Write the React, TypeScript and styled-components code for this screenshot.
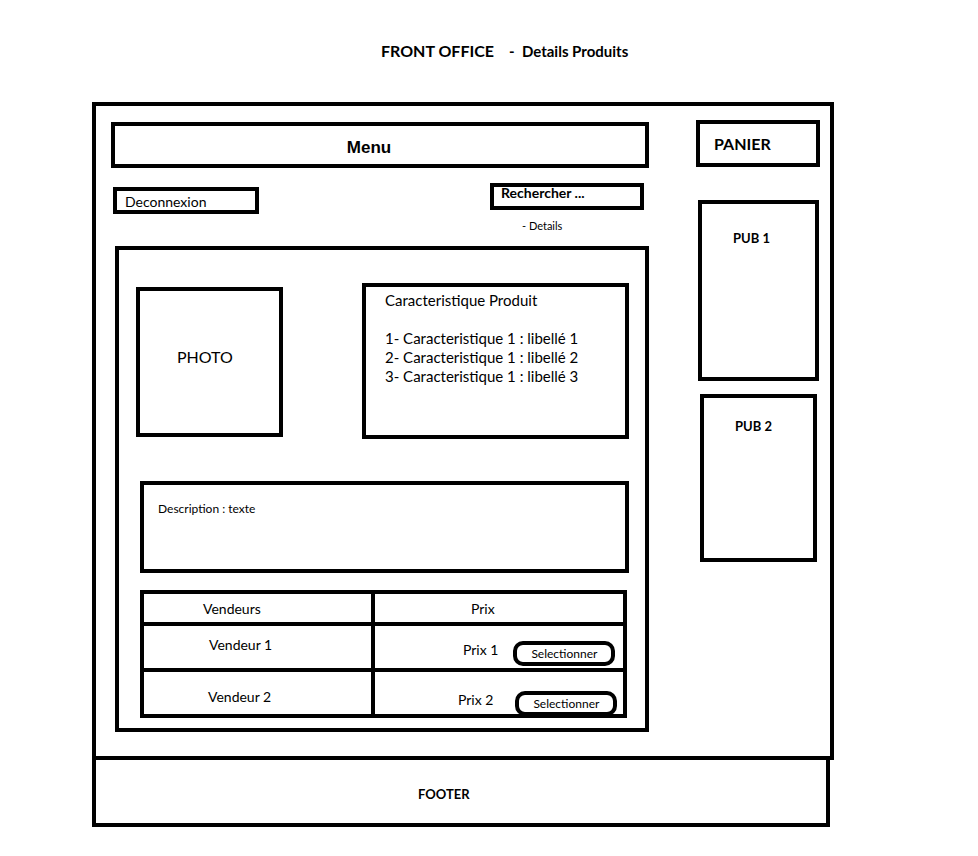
import styled, { createGlobalStyle } from "styled-components";

const GlobalStyle = createGlobalStyle`
  html, body {
    margin: 0;
    background: #fff;
  }
  body {
    font-family: Lato, "Open Sans", sans-serif;
    color: #000;
  }
  * {
    box-sizing: border-box;
  }
`;

const Page = styled.div`
  width: 978px;
  height: 856px;
  overflow: hidden;
`;

const Title = styled.h1`
  margin: 0;
  height: 102px;
  padding: 41px 0 0 381px;
  display: flex;
  align-items: baseline;
  font-size: 16px;
  font-weight: 700;
`;

const Subtitle = styled.span`
  margin-left: 15px;
  font-size: 15px;
  white-space: pre;
`;

const Frame = styled.div`
  margin-left: 92px;
  width: 742px;
  height: 658px;
  border: 4px solid #000;
  padding: 14px 0 0 15px;
  display: flex;
  gap: 47px;
`;

const MainColumn = styled.div`
  width: 538px;
  display: flex;
  flex-direction: column;
`;

const MenuBar = styled.div`
  margin-top: 2px;
  height: 46px;
  border: 4px solid #000;
  display: flex;
  align-items: center;
  justify-content: center;
  padding: 5px 22px 0 0;
  font-family: "Liberation Sans", Arial, sans-serif;
  font-size: 17px;
  font-weight: 700;
`;

const ToolRow = styled.div`
  margin-top: 15px;
  height: 63px;
  display: flex;
  justify-content: space-between;
  align-items: flex-start;
`;

const LogoutBox = styled.div`
  margin: 4px 0 0 2px;
  width: 146px;
  height: 27px;
  border: 4px solid #000;
  padding: 1px 0 0 8px;
  display: flex;
  align-items: center;
  font-size: 14px;
`;

const SearchGroup = styled.div`
  width: 154px;
  margin-right: 5px;
`;

const SearchBox = styled.div`
  height: 27px;
  border: 4px solid #000;
  padding: 0 0 0 7px;
  font-size: 14px;
  font-weight: 700;
  line-height: 12px;
`;

const SearchNote = styled.div`
  margin-top: 9px;
  padding-left: 32px;
  font-size: 11px;
`;

const ContentBox = styled.div`
  margin-left: 4px;
  width: 534px;
  height: 486px;
  border: 4px solid #000;
  padding: 33px 0 0 17px;
`;

const TopRow = styled.div`
  display: flex;
  align-items: flex-start;
  gap: 79px;
`;

const PhotoBox = styled.div`
  margin-top: 4px;
  width: 147px;
  height: 150px;
  border: 4px solid #000;
  padding: 56px 0 0 37px;
  font-size: 16px;
`;

const SpecBox = styled.div`
  width: 267px;
  height: 156px;
  border: 4px solid #000;
  padding: 4px 0 0 19px;
  font-size: 15px;
  line-height: 19px;
`;

const SpecList = styled.div`
  margin-top: 19px;
`;

const DescriptionBox = styled.div`
  margin: 42px 0 0 4px;
  width: 489px;
  height: 92px;
  border: 4px solid #000;
  padding: 16px 0 0 14px;
  font-size: 12px;
  line-height: 16px;
`;

const SellerTable = styled.div`
  margin: 17px 0 0 4px;
  width: 487px;
  height: 128px;
  border: 4px solid #000;
  display: grid;
  grid-template-columns: 231px 1fr;
  grid-template-rows: 32px 46px 42px;
  font-size: 14px;
`;

const Cell = styled.div<{ $pad: number; $top?: number; $last?: boolean; $left?: boolean }>`
  display: flex;
  align-items: ${(p) => (p.$top === undefined ? "center" : "flex-start")};
  padding-left: ${(p) => p.$pad}px;
  padding-top: ${(p) => p.$top ?? 0}px;
  border-bottom: ${(p) => (p.$last ? "none" : "4px solid #000")};
  border-right: ${(p) => (p.$left ? "4px solid #000" : "none")};
  line-height: 17px;
`;

const PriceLabel = styled.span`
  margin-top: -4px;
  line-height: 25px;
`;

const SelectButton = styled.div<{ $gap: number }>`
  margin-left: ${(p) => p.$gap}px;
  width: 102px;
  height: 25px;
  border: 4px solid #000;
  border-radius: 10px;
  display: flex;
  align-items: center;
  justify-content: center;
  font-size: 12px;
`;

const Sidebar = styled.div`
  width: 124px;
  display: flex;
  flex-direction: column;
  align-items: flex-start;
`;

const CartBox = styled.div`
  width: 124px;
  height: 47px;
  border: 4px solid #000;
  padding-left: 14px;
  display: flex;
  align-items: center;
  font-size: 16px;
  font-weight: 700;
`;

const PubBox = styled.div<{ $w: number; $h: number; $top: number; $left: number; $pt: number }>`
  margin: ${(p) => p.$top}px 0 0 ${(p) => p.$left}px;
  width: ${(p) => p.$w}px;
  height: ${(p) => p.$h}px;
  border: 4px solid #000;
  padding: ${(p) => p.$pt}px 0 0 31px;
  font-size: 13px;
  font-weight: 700;
`;

const Footer = styled.div`
  margin-left: 92px;
  width: 738px;
  height: 67px;
  border: 4px solid #000;
  border-top: none;
  padding: 4px 0 0 322px;
  display: flex;
  align-items: center;
  font-size: 13px;
  font-weight: 700;
`;

const sellers = [
  { name: "Vendeur 1", namePad: 65, nameTop: 10, price: "Prix 1", pricePad: 88, priceTop: 15, gap: 15 },
  { name: "Vendeur 2", namePad: 64, nameTop: 16, price: "Prix 2", pricePad: 83, priceTop: 19, gap: 22 },
];

const specs = [
  "1- Caracteristique 1 : libellé 1",
  "2- Caracteristique 1 : libellé 2",
  "3- Caracteristique 1 : libellé 3",
];

export default function App() {
  return (
    <Page>
      <GlobalStyle />
      <Title>
        FRONT OFFICE<Subtitle>-  Details Produits</Subtitle>
      </Title>
      <Frame>
        <MainColumn>
          <MenuBar>Menu</MenuBar>
          <ToolRow>
            <LogoutBox>Deconnexion</LogoutBox>
            <SearchGroup>
              <SearchBox>Rechercher ...</SearchBox>
              <SearchNote>- Details</SearchNote>
            </SearchGroup>
          </ToolRow>
          <ContentBox>
            <TopRow>
              <PhotoBox>PHOTO</PhotoBox>
              <SpecBox>
                Caracteristique Produit
                <SpecList>
                  {specs.map((s) => (
                    <div key={s}>{s}</div>
                  ))}
                </SpecList>
              </SpecBox>
            </TopRow>
            <DescriptionBox>Description : texte</DescriptionBox>
            <SellerTable>
              <Cell $pad={59} $left>
                Vendeurs
              </Cell>
              <Cell $pad={96}>Prix</Cell>
              {sellers.map((s, idx) => {
                const last = idx === sellers.length - 1;
                return [
                  <Cell key={s.name} $pad={s.namePad} $top={s.nameTop} $left $last={last}>
                    {s.name}
                  </Cell>,
                  <Cell key={s.price} $pad={s.pricePad} $top={s.priceTop} $last={last}>
                    <PriceLabel>{s.price}</PriceLabel>
                    <SelectButton $gap={s.gap}>Selectionner</SelectButton>
                  </Cell>,
                ];
              })}
            </SellerTable>
          </ContentBox>
        </MainColumn>
        <Sidebar>
          <CartBox>PANIER</CartBox>
          <PubBox $w={121} $h={181} $top={33} $left={2} $pt={26}>
            PUB 1
          </PubBox>
          <PubBox $w={117} $h={168} $top={13} $left={4} $pt={20}>
            PUB 2
          </PubBox>
        </Sidebar>
      </Frame>
      <Footer>FOOTER</Footer>
    </Page>
  );
}
